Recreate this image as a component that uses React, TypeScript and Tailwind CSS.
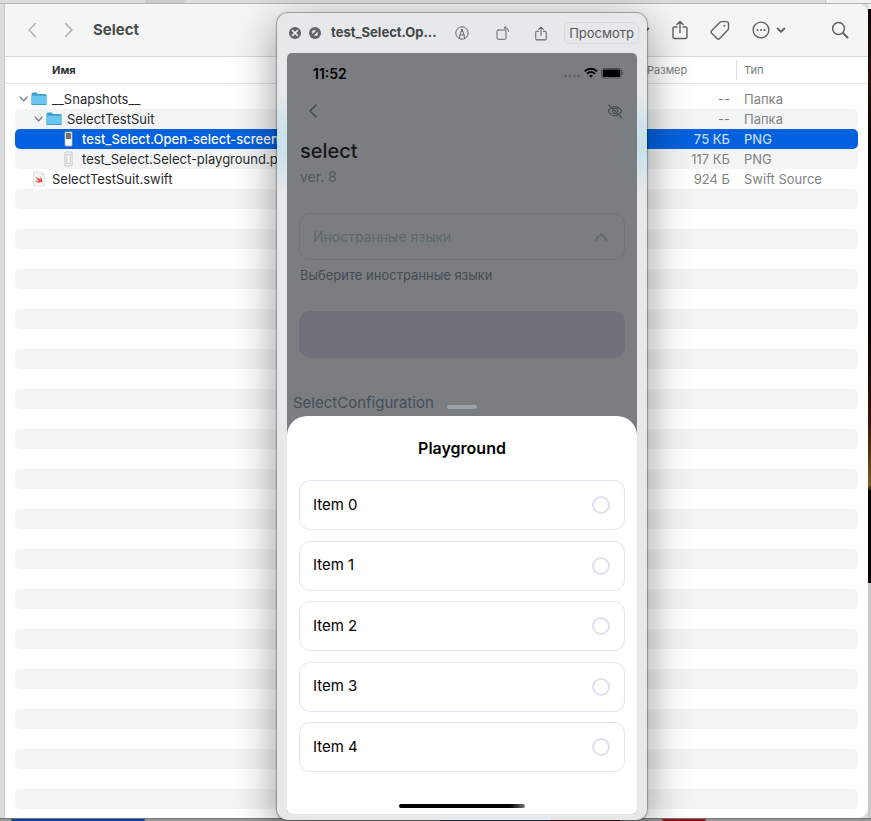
import React, { useState } from 'react';

type FileKind = 'folder' | 'darkShot' | 'lightShot' | 'swift';

interface FileRow {
  name: string;
  kind: FileKind;
  depth: 0 | 1 | 2;
  size: string;
  type: string;
}

const files: FileRow[] = [
  { name: '__Snapshots__', kind: 'folder', depth: 0, size: '--', type: 'Папка' },
  { name: 'SelectTestSuit', kind: 'folder', depth: 1, size: '--', type: 'Папка' },
  { name: 'test_Select.Open-select-screen.png', kind: 'darkShot', depth: 2, size: '75 КБ', type: 'PNG' },
  { name: 'test_Select.Select-playground.png', kind: 'lightShot', depth: 2, size: '117 КБ', type: 'PNG' },
  { name: 'SelectTestSuit.swift', kind: 'swift', depth: 0, size: '924 Б', type: 'Swift Source' },
];

const emptyRows = Array.from({ length: 31 }, (_, i) => i + files.length);
const indent = ['pl-1', 'pl-[19px]', 'pl-[34px]'];
const items = ['Item 0', 'Item 1', 'Item 2', 'Item 3', 'Item 4'];

function Chevron({ d, className }: { d: string; className: string }) {
  return (
    <svg viewBox="0 0 16 16" className={className} fill="none" stroke="currentColor" strokeLinecap="round" strokeLinejoin="round" aria-hidden="true">
      <path d={d} />
    </svg>
  );
}

function ShareIcon({ className }: { className: string }) {
  return (
    <svg viewBox="0 0 18 20" className={className} fill="none" stroke="currentColor" strokeWidth="1.4" strokeLinecap="round" strokeLinejoin="round" aria-hidden="true">
      <path d="M6 7H3.5A1.5 1.5 0 0 0 2 8.500V17a1.500 1.500 0 0 0 1.500 1.500h11A1.500 1.500 0 0 0 16 17V8.500A1.500 1.500 0 0 0 14.500 7H12M9 12.500V1.500M5.800 4.500 9 1.400l3.200 3.100" />
    </svg>
  );
}

function FileIcon({ kind }: { kind: FileKind }) {
  if (kind === 'folder') {
    return (
      <svg viewBox="0 0 16 16" className="h-4 w-4 shrink-0" aria-hidden="true">
        <path d="M.5 3A1.500 1.500 0 0 1 2 1.500h3.500L7 3h7.500a1 1 0 0 1 1 1v9a1 1 0 0 1-1 1h-13a1 1 0 0 1-1-1Z" fill="#3d9fc9" />
        <path d="M.5 4.800h15V13a1 1 0 0 1-1 1h-13a1 1 0 0 1-1-1Z" fill="#69c6f3" />
        <path d="M.8 13.500h14.400" stroke="#3b93bd" strokeWidth=".8" />
      </svg>
    );
  }
  if (kind === 'swift') {
    return (
      <svg viewBox="0 0 16 16" className="h-4 w-4 shrink-0" aria-hidden="true">
        <path d="M2.500 1h8l3 3v11h-11Z" fill="#f6f5f5" stroke="#d9d9d9" strokeWidth=".7" />
        <path d="M10.500 1v3h3" fill="#ddd" />
        <path d="M4 5c1.500 1.700 2.800 2.600 3.900 3.200C6.800 7.200 6.200 6.400 5.700 5.700c1.500 1.300 2.600 2 3.700 2.700.3-1 0-1.900-.6-2.800 1.700 1 2.700 2.800 2.400 4.400.4.600.5 1.100.2 1.500-.5-.6-1.100-.5-1.700-.3-1.800.9-4.300.2-5.500-1.800 1.300.8 2.600.9 3.600.5C6.200 8.600 4.900 6.800 4 5Z" fill="#e9503c" />
      </svg>
    );
  }
  return (
    <svg viewBox="0 0 16 16" className="h-4 w-4 shrink-0" aria-hidden="true">
      <rect x="4" y="1" width="7" height="14" rx=".8" fill="#fff" stroke="#b5b5b5" strokeWidth=".8" />
      {kind === 'darkShot' ? (
        <path d="M5 2h5v6H5Z" fill="#6e7275" />
      ) : (
        <rect x="5.800" y="3.200" width="3.400" height="9.600" fill="none" stroke="#b9b9b9" strokeWidth=".8" />
      )}
    </svg>
  );
}

function rowTone(index: number, selected: boolean) {
  if (selected) return 'bg-[#0261df]';
  return index % 2 === 1 ? 'bg-[#f3f5f5]' : 'bg-white';
}

function Toolbar() {
  return (
    <header className="flex h-[53px] shrink-0 items-center border-b border-[#d6d7d7] bg-[#f4f6f5] pr-[19px] pl-5 text-[#5f6161]">
      <button aria-label="Назад" className="text-[#a9abab]">
        <Chevron d="M10.500 1.500 4 8l6.500 6.500" className="h-4 w-4 stroke-[1.4]" />
      </button>
      <button aria-label="Вперёд" className="ml-[19px] text-[#a9abab]">
        <Chevron d="M5.500 1.500 12 8l-6.500 6.500" className="h-4 w-4 stroke-[1.4]" />
      </button>
      <h1 className="ml-[17px] text-[15px] font-bold text-[#4a4c4c]">Select</h1>
      <div className="ml-auto flex items-center">
        <button aria-label="Группировка" className="mr-5">
          <Chevron d="m3.500 6 4.500 4.500L12.500 6" className="h-3 w-3 stroke-[2.500]" />
        </button>
        <button aria-label="Поделиться" className="mr-[21px]">
          <ShareIcon className="h-5 w-[18px]" />
        </button>
        <button aria-label="Теги" className="mr-[22px]">
          <svg viewBox="0 0 20 20" className="h-5 w-5" fill="none" stroke="currentColor" strokeWidth="1.400" strokeLinejoin="round" aria-hidden="true">
            <path d="m1.700 10.700 8-8.200c.6-.6 1.200-.9 2-.9h4.800c1.200 0 2 .8 2 2v4.700c0 .8-.3 1.400-.9 2l-8 8.100c-.8.800-1.800.8-2.600 0l-5.300-5.200c-.8-.8-.8-1.700 0-2.500Z" />
            <circle cx="14.300" cy="5.800" r="1" fill="currentColor" stroke="none" />
          </svg>
        </button>
        <button aria-label="Действия" className="mr-[44px] flex items-center gap-[5px]">
          <svg viewBox="0 0 18 18" className="h-[18px] w-[18px]" fill="none" stroke="currentColor" strokeWidth="1.400" aria-hidden="true">
            <circle cx="9" cy="9" r="7.900" />
            <g fill="currentColor" stroke="none">
              <circle cx="5.500" cy="9" r="1.100" />
              <circle cx="9" cy="9" r="1.100" />
              <circle cx="12.500" cy="9" r="1.100" />
            </g>
          </svg>
          <Chevron d="m3.500 6 4.500 4.500L12.500 6" className="h-3 w-3 stroke-[2.500]" />
        </button>
        <button aria-label="Поиск">
          <svg viewBox="0 0 18 18" className="h-[18px] w-[18px]" fill="none" stroke="currentColor" strokeWidth="1.500" strokeLinecap="round" aria-hidden="true">
            <circle cx="7.500" cy="7.500" r="5.900" />
            <path d="m12 12 4.500 4.500" strokeWidth="1.900" />
          </svg>
        </button>
      </div>
    </header>
  );
}

function FileTable() {
  return (
    <table className="mb-[9px] w-full table-fixed border-separate border-spacing-0 text-left text-[13px] leading-5">
      <thead className="text-[11px] text-[#7c7e7e]">
        <tr>
          <td className="h-[27px] w-[10px] border-b border-[#e0e1e1] p-0" />
          <th className="h-[27px] border-b border-[#e0e1e1] py-0 pr-0 pl-[37px] text-left font-bold text-[#333]">Имя</th>
          <th className="h-[27px] w-[97px] border-b border-[#e0e1e1] py-0 pr-0 pl-2 text-left font-normal">Размер</th>
          <th className="h-[27px] w-[122px] border-b border-[#e0e1e1] p-0 text-left font-normal">
            <span className="block border-l border-[#dedfdf] pl-[7px]">Тип</span>
          </th>
          <td className="h-[27px] w-[10px] border-b border-[#e0e1e1] p-0" />
        </tr>
      </thead>
      <tbody>
        <tr>
          <td colSpan={5} className="h-[5px] p-0" />
        </tr>
        {files.map((file, index) => {
          const selected = file.kind === 'darkShot';
          const tone = rowTone(index, selected);
          return (
            <tr key={file.name}>
              <td className="p-0" />
              <td className={`h-5 rounded-l-[5px] p-0 ${tone}`}>
                <div className={`flex h-5 items-center ${indent[file.depth]}`}>
                  <span className="flex w-3 shrink-0 text-[#777979]">
                    {file.kind === 'folder' && <Chevron d="m2 5 5.500 6L13 5" className="h-[10px] w-[10px] stroke-[2.300]" />}
                  </span>
                  <FileIcon kind={file.kind} />
                  <span className={`ml-[5px] whitespace-nowrap ${selected ? 'font-medium text-white' : 'text-[#292b2b]'}`}>{file.name}</span>
                </div>
              </td>
              <td className={`h-5 py-0 pr-[6px] pl-0 text-right whitespace-nowrap ${tone} ${selected ? 'font-medium text-[#bfd8fb]' : 'text-[#808282]'}`}>{file.size}</td>
              <td className={`h-5 rounded-r-[5px] py-0 pr-0 pl-2 whitespace-nowrap ${tone} ${selected ? 'font-medium text-[#bfd8fb]' : 'text-[#808282]'}`}>{file.type}</td>
              <td className="p-0" />
            </tr>
          );
        })}
        {emptyRows.map((index) => (
          <tr key={index}>
            <td className="p-0" />
            <td colSpan={3} className={`h-5 rounded-[5px] p-0 ${rowTone(index, false)}`} />
            <td className="p-0" />
          </tr>
        ))}
      </tbody>
    </table>
  );
}

function PreviewHeader() {
  return (
    <header className="flex h-10 items-center pr-2 pl-3 text-[#646668]">
      <button aria-label="Закрыть">
        <svg viewBox="0 0 12 12" className="h-3 w-3" aria-hidden="true">
          <circle cx="6" cy="6" r="6" fill="#646567" />
          <path d="m3.600 3.600 4.800 4.800m0-4.800L3.600 8.400" stroke="#eee" strokeWidth="1.500" strokeLinecap="round" />
        </svg>
      </button>
      <button aria-label="Во весь экран" className="ml-2">
        <svg viewBox="0 0 12 12" className="h-3 w-3" aria-hidden="true">
          <circle cx="6" cy="6" r="6" fill="#646567" />
          <path d="M3.300 7.200V4.500a1.200 1.200 0 0 1 1.200-1.200h2.700Zm5.400-2.400v2.700a1.200 1.200 0 0 1-1.200 1.200H4.800Z" fill="#eee" />
        </svg>
      </button>
      <h2 className="ml-[10px] text-[13px] font-bold text-[#444648]">test_Select.Op...</h2>
      <div className="ml-auto flex items-center">
        <button aria-label="Разметка" className="mr-[27px]">
          <svg viewBox="0 0 14 14" className="h-[14px] w-[14px]" fill="none" stroke="currentColor" strokeWidth="1" strokeLinejoin="round" aria-hidden="true">
            <circle cx="7" cy="7" r="6.200" />
            <path d="M4.500 12.500 5 8.500 7 3l2 5.500.5 4M5 8.500c1.200.8 2.800.8 4 0M7 3v3" />
          </svg>
        </button>
        <button aria-label="Повернуть" className="mr-6">
          <svg viewBox="0 0 14 14" className="h-[14px] w-[14px]" fill="none" stroke="currentColor" strokeWidth="1" strokeLinecap="round" strokeLinejoin="round" aria-hidden="true">
            <rect x="1" y="4" width="9" height="9.300" rx="1.200" />
            <path d="M8.500 1.900c2.600-.2 4 1 4 3.500M10 .4 8.400 1.900 10 3.400" />
          </svg>
        </button>
        <button aria-label="Поделиться" className="mr-4">
          <ShareIcon className="h-[15px] w-[14px]" />
        </button>
        <button className="h-[22px] rounded-[5px] border border-[#d9dadc] px-1 text-[13px] leading-5 text-[#58595b]">Просмотр</button>
      </div>
    </header>
  );
}

function StatusBar() {
  return (
    <div className="flex h-10 items-center justify-between pr-[13px] pl-[26px] text-black">
      <span className="text-[14px] font-semibold">11:52</span>
      <svg viewBox="0 0 60 12" className="h-3 w-[60px]" aria-hidden="true">
        <g fill="#5e6163">
          <circle cx="1.700" cy="9" r="1.400" />
          <circle cx="6" cy="9" r="1.400" />
          <circle cx="10.300" cy="9" r="1.400" />
          <circle cx="14.600" cy="9" r="1.400" />
        </g>
        <g fill="none" stroke="#000" strokeWidth="1.900">
          <path d="M20.700 4.300c3.600-3.400 8.800-3.400 12.400 0M22.900 6.800c2.400-2.100 5.600-2.100 8 0" />
        </g>
        <path d="M26.900 10.800 24.900 8.700a2.900 2.900 0 0 1 4 0Z" />
        <rect x="37.500" y="1.500" width="20" height="9.500" rx="2.500" fill="none" stroke="#4e5052" />
        <rect x="38.700" y="2.600" width="17.600" height="7.300" rx="1.400" />
        <path d="M58.500 4.500c1.300.5 1.300 2.900 0 3.400Z" fill="#4e5052" />
      </svg>
    </div>
  );
}

function PhoneScreen() {
  const [picked, setPicked] = useState('');
  return (
    <div className="mx-[10px] mb-[6px] overflow-hidden rounded-[5px] bg-[#7a7e80]">
      <StatusBar />
      <div className="flex h-9 items-center justify-between pr-[14px] pl-[18px] text-[#424d57]">
        <button aria-label="Назад">
          <Chevron d="M11 2 5 8l6 6" className="h-4 w-4 stroke-[1.600]" />
        </button>
        <button aria-label="Скрыть">
          <svg viewBox="0 0 16 16" className="h-4 w-4" fill="none" stroke="currentColor" strokeWidth="1.200" strokeLinecap="round" strokeLinejoin="round" aria-hidden="true">
            <path d="m2 2 12.500 12.500M6 3.800c4-1 7 1.200 8.800 4.200-.6 1-1.300 1.900-2.200 2.600M4 4.800C2.800 5.600 1.900 6.700 1.200 8c2.200 3.900 6 5.500 9.300 4.100M7.500 5.500a2.600 2.600 0 0 1 3.100 3.100M5.700 7.200a2.600 2.600 0 0 0 3.200 3.300" />
          </svg>
        </button>
      </div>
      <div className="px-3 pt-2">
        <h3 className="pl-px text-[20px] leading-7 font-medium text-[#15181b]">select</h3>
        <p className="mt-[2px] pl-px text-[14px] leading-5 text-[#50585f]">ver. 8</p>
        <button id="languages" aria-haspopup="dialog" aria-expanded="true" aria-describedby="languages-hint" className="mt-[26px] flex h-[47px] w-full items-center justify-between rounded-[11px] border border-[#6f757a] px-[15px] pl-[13px] text-[14px] text-[#5b6771]">
          Иностранные языки
          <Chevron d="m2.500 11 5.500-6 5.500 6" className="h-4 w-4 stroke-[1.800]" />
        </button>
        <p id="languages-hint" className="mt-[5px] pl-px text-[13px] leading-5 text-[#434c55]">Выберите иностранные языки</p>
        <button disabled aria-label="Продолжить" className="mt-[26px] block h-[47px] w-full rounded-[11px] bg-[#6e717a]" />
      </div>
      <div className="relative mt-[35px] h-[23px] pl-[6px]">
        <p className="text-[15px] leading-5 text-[#434f58]">SelectConfiguration</p>
        <span className="absolute top-3 left-1/2 h-1 w-[30px] -translate-x-1/2 rounded-full bg-[#98a2a9]" />
      </div>
      <section className="rounded-t-[20px] bg-white px-3 pt-5 pb-[6px] text-black">
        <h3 className="text-center text-[16px] leading-6 font-semibold">Playground</h3>
        <div className="mt-5 flex h-[292px] flex-col justify-between">
          {items.map((item) => (
            <label key={item} className="flex h-[50px] items-center justify-between rounded-[11px] border border-[#dfe4ed] pr-[14px] pl-[13px] text-[15px]">
              {item}
              <input type="radio" name="playground" value={item} checked={picked === item} onChange={() => setPicked(item)} className="h-[18px] w-[18px] appearance-none rounded-full border-2 border-[#dce2ec] checked:border-[5px] checked:border-[#0261df]" />
            </label>
          ))}
        </div>
        <div className="mx-auto mt-8 h-1 w-[126px] rounded-full bg-linear-to-r from-black from-85% to-[#777]" />
      </section>
    </div>
  );
}

export default function App() {
  return (
    <main className="relative grid min-h-screen grid-cols-[5px_1fr_3px] grid-rows-[4px_1fr_3px] overflow-hidden bg-[#dadddc] font-['Inter','Liberation_Sans',sans-serif]">
      <div className="col-span-3 flex border-b border-[#b3b5b5]">
        <span className="ml-[145px] h-full w-10 rounded-b-full bg-[#c9cccb]" />
        <span className="ml-auto h-full w-[46px] border-l border-[#c4c4c4] bg-[#efefef]" />
      </div>
      <div className="border-r border-[#c8cbca]" />
      <section className="flex min-w-0 flex-col overflow-hidden rounded-tr-[10px] rounded-br-[10px] bg-white">
        <Toolbar />
        <FileTable />
      </section>
      <div className="flex flex-col bg-[#c9c9c9]">
        <span className="h-[5px] bg-[#efefef]" />
        <span className="h-[574px] bg-[linear-gradient(to_bottom,#0a0202,#2e1006_12%,#0a0101_24%,#0a0101_55%,#3a1505_72%,#7a5a20_83%,#0a0101_84%)]" />
      </div>
      <div className="col-span-3 flex border-t border-[#777] bg-[#999797]">
        <span className="ml-[11px] h-full w-[134px] rounded-b-full bg-[#03409a]" />
        <span className="ml-[295px] h-full w-[110px] bg-[#3b5684]" />
        <span className="h-full w-[70px] bg-[#7d1a18]" />
        <span className="ml-[42px] h-full w-11 rounded-b-full bg-[#8e1a16]" />
      </div>
      <aside className="absolute top-[13px] left-[277px] w-[370px] rounded-[11px] bg-[#e7e8ea] bg-[linear-gradient(to_bottom,#e7e8ea_80px,#cae1eb_120px,#cae1eb_140px,#e7e8ea_180px)] shadow-[0_0_1px_1px_rgba(0,0,0,0.3),0_12px_44px_rgba(0,0,0,0.42)]">
        <PreviewHeader />
        <PhoneScreen />
      </aside>
    </main>
  );
}
